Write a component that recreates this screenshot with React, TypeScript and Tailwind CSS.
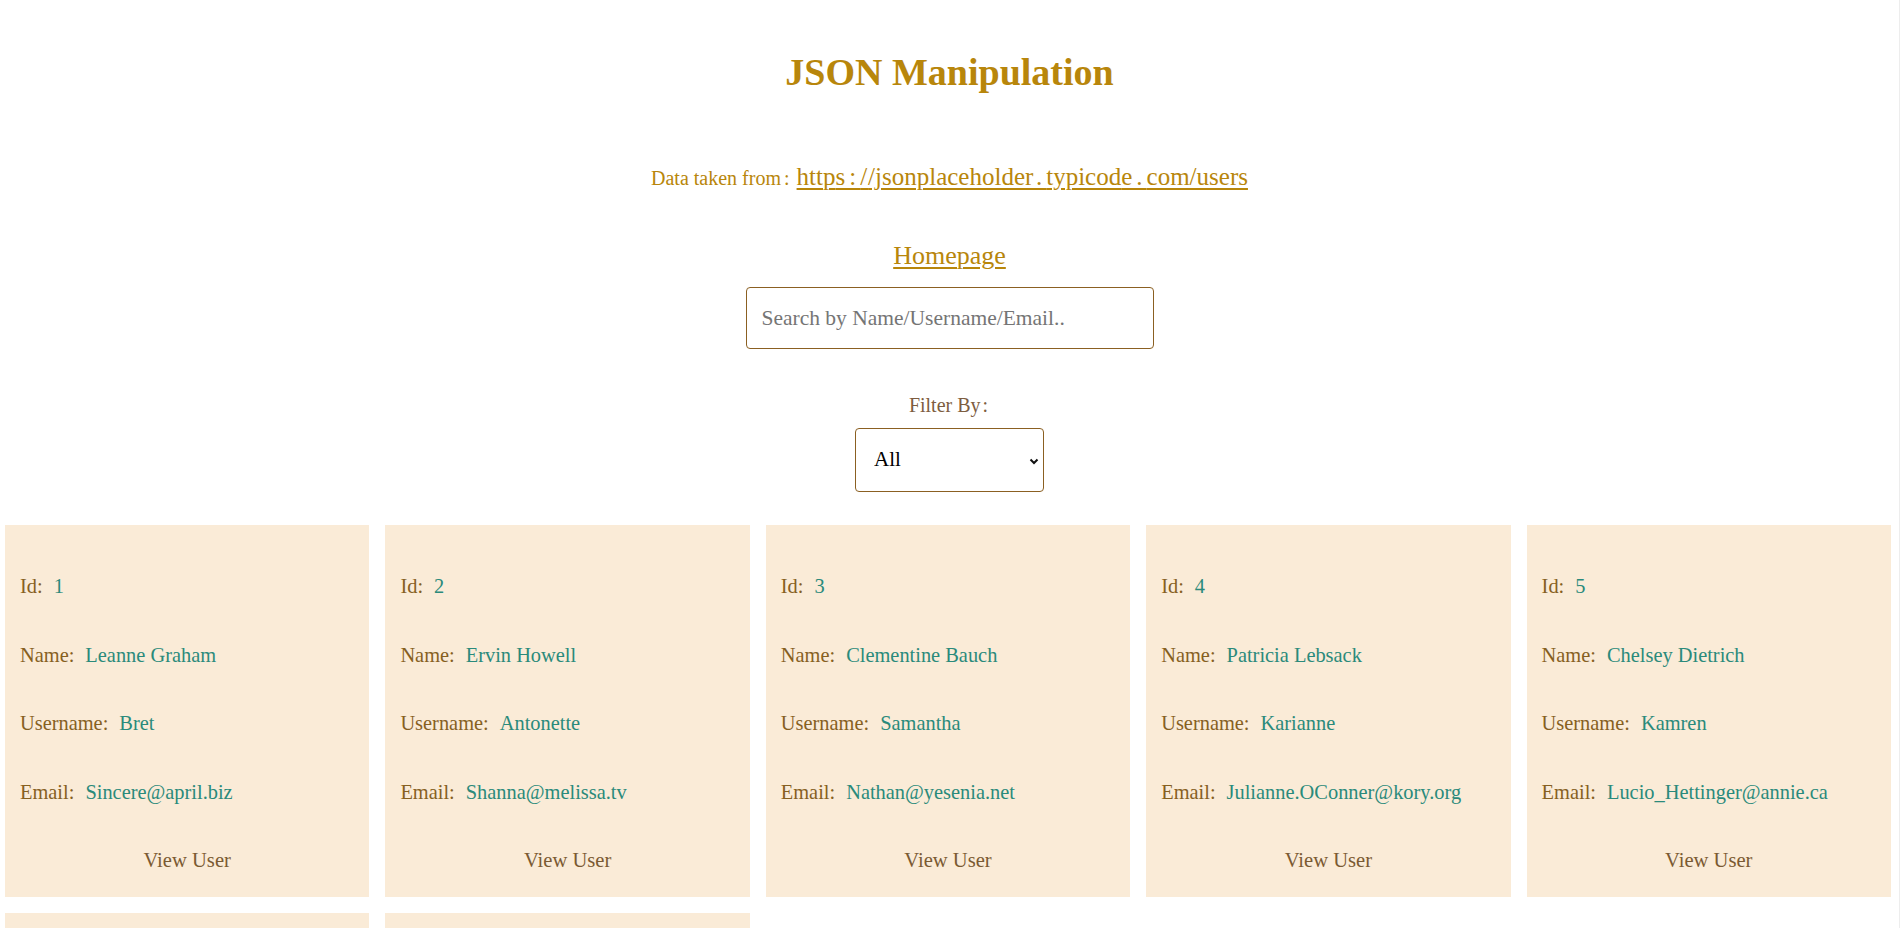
import React from "react";

const users = [
  { id: 1, name: "Leanne Graham", username: "Bret", email: "Sincere@april.biz" },
  { id: 2, name: "Ervin Howell", username: "Antonette", email: "Shanna@melissa.tv" },
  { id: 3, name: "Clementine Bauch", username: "Samantha", email: "Nathan@yesenia.net" },
  { id: 4, name: "Patricia Lebsack", username: "Karianne", email: "Julianne.OConner@kory.org" },
  { id: 5, name: "Chelsey Dietrich", username: "Kamren", email: "Lucio_Hettinger@annie.ca" },
  { id: 6, name: "Mrs. Dennis Schulist", username: "Leopoldo_Corkery", email: "Karley_Dach@jasper.info" },
  { id: 7, name: "Kurtis Weissnat", username: "Elwyn.Skiles", email: "Telly.Hoeger@billy.biz" },
];

function Row({ label, value }: { label: string; value: string | number }) {
  return (
    <div className="h-[24px] leading-[24px] whitespace-nowrap shrink-0">
      <span className="text-[#86601f]">{label}:</span>
      <span className="ml-[11px] text-[#2a8a7b]">{value}</span>
    </div>
  );
}

export default function App() {
  return (
    <div className="h-screen overflow-hidden bg-white font-['Liberation_Serif','Times_New_Roman',serif]">
      <div className="w-[1900px] min-h-full border-r border-[#ededed] flex flex-col items-center">
        <h1 className="shrink-0 mt-[50px] text-[38px] leading-[44px] font-bold text-[#b8860b]">JSON Manipulation</h1>

        <div className="shrink-0 mt-[67px] h-[32px] leading-[32px] text-[25px] text-center whitespace-nowrap">
          <span className="text-[20px] text-[#b8860b]">
            Data taken fro<span className="tracking-[3px]">m:</span>
          </span>
          <a
            href="#"
            className="ml-[4px] text-[#b8860b] underline underline-offset-[3px] decoration-[1.5px]"
          >
            http<span className="tracking-[4px]">s:</span>
            <span className="tracking-[1px]">/</span>/jsonplaceholde<span className="tracking-[4px]">r.</span>typicod
            <span className="tracking-[4px]">e.</span>com/users
          </a>
        </div>

        <a
          href="#"
          className="shrink-0 mt-[47px] h-[32px] leading-[32px] text-[26px] text-[#b8860b] underline underline-offset-[3px] decoration-[1.5px]"
        >
          Homepage
        </a>

        <input
          type="text"
          placeholder="Search by Name/Username/Email.."
          className="shrink-0 mt-[15px] w-[408px] h-[62px] rounded-[4px] border border-[#8b6022] px-[15px] text-[21.5px] outline-none placeholder:text-[#757575] font-['Liberation_Serif',serif]"
        />

        <div className="shrink-0 mt-[44px] h-[24px] leading-[24px] text-[20px] text-[#7d5d40]">
          Filter B<span className="tracking-[2px]">y:</span>
        </div>

        <div className="shrink-0 relative mt-[11px] w-[189px] h-[64px]">
          <select className="appearance-none w-full h-full rounded-[4px] border border-[#8b6022] bg-white pl-[18px] text-[21px] text-black outline-none font-['Liberation_Serif',serif]">
            <option>All</option>
            <option>Name</option>
            <option>Username</option>
            <option>Email</option>
          </select>
          <svg
            className="pointer-events-none absolute right-[5px] top-[30px]"
            width="10"
            height="7"
            viewBox="0 0 10 7"
          >
            <path d="M1.5 1.5 L5 5 L8.5 1.5" fill="none" stroke="#111" strokeWidth="2" />
          </svg>
        </div>

        <div className="shrink-0 mt-[33px] w-full pl-[5px] pr-[8px] grid grid-cols-5 gap-[16px]">
          {users.map((u) => (
            <div
              key={u.id}
              className="h-[372px] bg-[#faebd7] pl-[15px] pt-[49px] text-[20.4px] flex flex-col gap-[44.5px]"
            >
              <Row label="Id" value={u.id} />
              <Row label="Name" value={u.name} />
              <Row label="Username" value={u.username} />
              <Row label="Email" value={u.email} />
              <div className="shrink-0 pr-[15px] flex justify-center">
                <button className="h-[24px] leading-[24px] bg-transparent text-[#7a5a32] text-[20.6px] font-['Liberation_Serif',serif]">
                  View User
                </button>
              </div>
            </div>
          ))}
        </div>
      </div>
    </div>
  );
}
